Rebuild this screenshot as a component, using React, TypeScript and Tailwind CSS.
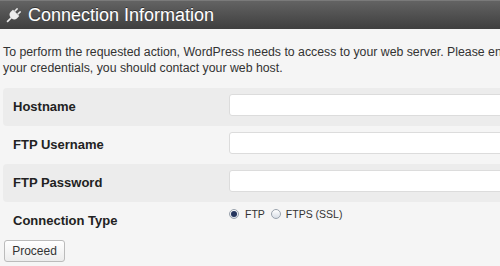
import React from "react";

type Field = { label: string; type: string };

const FIELDS: Field[] = [
  { label: "Hostname", type: "text" },
  { label: "FTP Username", type: "text" },
  { label: "FTP Password", type: "password" },
];

function PlugIcon() {
  return (
    <svg viewBox="0 0 16 16" className="h-[17px] w-[17px]">
      <g transform="rotate(45 8 8)" fill="#ececec">
        <rect x="5.2" y="0.5" width="1.6" height="4" rx="0.5" />
        <rect x="9.2" y="0.5" width="1.6" height="4" rx="0.5" />
        <path d="M3.8 4.5h8.4v3.2c0 2-1.6 3.4-3.4 3.5h-1.6c-1.8-.1-3.4-1.5-3.4-3.5z" />
        <rect x="7.2" y="11" width="1.6" height="5.5" />
      </g>
    </svg>
  );
}

function Radio({ checked }: { checked?: boolean }) {
  return (
    <span className="flex h-[10px] w-[10px] items-center justify-center rounded-full border border-[#9aa3ad] bg-gradient-to-b from-[#ffffff] to-[#d8dee6]">
      {checked && <span className="h-[6px] w-[6px] rounded-full bg-[#24355d]" />}
    </span>
  );
}

export default function App() {
  return (
    <div className="h-[266px] w-full overflow-hidden bg-[#f5f5f5] font-['Liberation_Sans',Arial,sans-serif] text-[#333]">
      <div className="w-[900px]">
        {/* Header */}
        <div className="flex h-[29px] items-center gap-[6px] border-t border-[#7a7a7a] bg-gradient-to-b from-[#636363] to-[#3f3f3f] pl-[5px]">
          <PlugIcon />
          <h2 className="text-[18px] leading-none text-white [text-shadow:0_-1px_0_#333]">
            Connection Information
          </h2>
        </div>

        <p className="mt-[15px] pl-[3px] text-[12.3px] leading-4 whitespace-nowrap">
          To perform the requested action, WordPress needs to access to your web server. Please enter your FTP
          credentials to proceed. If you do not remember
          <br />
          your credentials, you should contact your web host.
        </p>

        {/* Form table */}
        <div className="mt-[12px] ml-[3px]">
          {FIELDS.map((f, i) => (
            <div
              key={f.label}
              className={`flex h-[38px] items-start rounded-l-[4px] ${i % 2 === 0 ? "bg-[#ececec]" : ""}`}
            >
              <label className="w-[226px] shrink-0 py-[11px] pl-[10px] text-[13px] leading-4 font-bold text-[#222]">
                {f.label}
              </label>
              <input
                type={f.type}
                className="mt-[6px] h-[22px] w-[400px] rounded-[3px] border border-[#dcdcdc] bg-white"
              />
            </div>
          ))}
          <div className="flex h-[36px] items-start">
            <span className="w-[226px] shrink-0 py-[11px] pl-[10px] text-[13px] leading-4 font-bold text-[#222]">
              Connection Type
            </span>
            <div className="mt-[5px] flex items-center text-[10.5px] leading-[14px] text-[#333]">
              <Radio checked />
              <span className="ml-[6px]">FTP</span>
              <span className="ml-[6px]">
                <Radio />
              </span>
              <span className="ml-[5px]">FTPS (SSL)</span>
            </div>
          </div>
        </div>

        <button className="ml-[4px] h-[22px] w-[61px] rounded-[3px] border border-[#bbb] bg-gradient-to-b from-white to-[#ececec] text-[12px] text-[#333]">
          Proceed
        </button>
      </div>
    </div>
  );
}
